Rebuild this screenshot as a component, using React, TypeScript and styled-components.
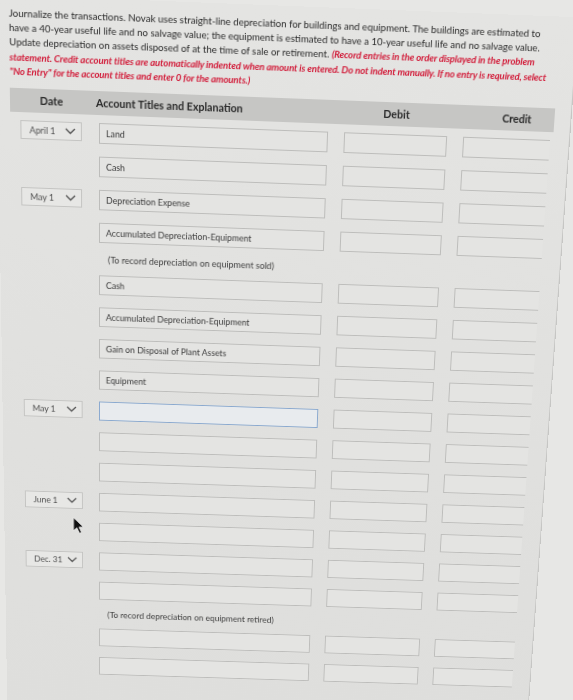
import React from "react";
import styled, { createGlobalStyle } from "styled-components";

const GlobalStyle = createGlobalStyle`
  html, body {
    margin: 0;
    padding: 0;
    height: 700px;
    overflow: hidden;
    background: #e7e7e5;
  }
  body {
    font-family: Lato, "Open Sans", "Liberation Sans", sans-serif;
  }
`;

// the reference is a photo of a screen, so the flat page is warped onto
// the measured corners of the journal table
type Pt = [number, number];

function homography(src: Pt[], dst: Pt[]): number[] {
  const A: number[][] = [];
  const b: number[] = [];
  for (let i = 0; i < 4; i++) {
    const [x, y] = src[i];
    const [u, v] = dst[i];
    A.push([x, y, 1, 0, 0, 0, -x * u, -y * u]);
    b.push(u);
    A.push([0, 0, 0, x, y, 1, -x * v, -y * v]);
    b.push(v);
  }
  for (let c = 0; c < 8; c++) {
    let p = c;
    for (let r = c + 1; r < 8; r++) if (Math.abs(A[r][c]) > Math.abs(A[p][c])) p = r;
    [A[c], A[p]] = [A[p], A[c]];
    [b[c], b[p]] = [b[p], b[c]];
    for (let r = 0; r < 8; r++) {
      if (r === c) continue;
      const f = A[r][c] / A[c][c];
      for (let k = c; k < 8; k++) A[r][k] -= f * A[c][k];
      b[r] -= f * b[c];
    }
  }
  return b.map((v, i) => v / A[i][i]);
}

const warp = (() => {
  const [a, b, c, d, e, f, g, h] = homography(
    [
      [100, 123],
      [550, 123],
      [100, 709],
      [550, 709],
    ],
    [
      [99, 123],
      [550, 140],
      [99, 657],
      [513, 670],
    ]
  );
  return `matrix3d(${a},${d},0,${g},${b},${e},0,${h},0,0,1,0,${c},${f},0,1)`;
})();

const Screen = styled.div`
  position: relative;
  width: 569px;
  height: 780px;
  transform-origin: 0 0;
  background: linear-gradient(180deg, #e4e4e2 0%, #e0e0de 60%, #dededc 100%);
  border-right: 1px solid #c6c6c4;
`;

const Intro = styled.div`
  padding: 11px 0 0 12px;
  font-size: 9.55px;
  line-height: 14.2px;
  color: #2b2b2b;
`;

const Line = styled.div`
  white-space: nowrap;
`;

const Red = styled.span`
  color: #d21f3c;
  font-weight: 700;
  font-style: italic;
  letter-spacing: -0.15px;
`;

const Grid = styled.div`
  display: grid;
  grid-template-columns: 62px 228px 103px 87px;
  column-gap: 16px;
  padding-left: 10px;
`;

const Header = styled(Grid)`
  margin: 9px 0 0 12px;
  width: 541px;
  height: 24px;
  box-sizing: border-box;
  align-items: center;
  background: #c6c6c4;
  font-size: 10.6px;
  font-weight: 700;
  color: #2a2a2a;
`;

const HeadCell = styled.div<{ $align?: string; $shift?: number }>`
  text-align: ${(p) => p.$align || "center"};
  margin-left: ${(p) => p.$shift || 0}px;
  white-space: nowrap;
`;

const Body = styled.div`
  margin: 8px 0 0 12px;
`;

const Row = styled(Grid)`
  height: 34px;
  align-items: start;
`;

const NoteRow = styled.div`
  height: 21px;
  padding-left: 97px;
  box-sizing: border-box;
  font-size: 9px;
  line-height: 10px;
  color: #3d3d3d;
  white-space: nowrap;
`;

const DateCell = styled.div`
  position: relative;
  height: 21px;
`;

const DateSelect = styled.div`
  height: 19px;
  width: 61px;
  box-sizing: border-box;
  border: 1px solid #c4c4c2;
  background: #e7e7e5;
  display: flex;
  align-items: center;
  justify-content: space-between;
  padding: 0 5px 0 8px;
  font-size: 8.8px;
  color: #4f4f4f;
`;

const Field = styled.div<{ $focused?: boolean; $open?: boolean }>`
  height: 21px;
  box-sizing: border-box;
  border: ${(p) => (p.$focused ? "1.5px solid #8aa9cf" : "1px solid #bdbdbb")};
  border-right: ${(p) => (p.$open ? "none" : "")};
  background: ${(p) => (p.$focused ? "#e8ebee" : "#e4e4e2")};
  display: flex;
  align-items: center;
  padding-left: 6px;
  font-size: 8.8px;
  color: #3a3a3a;
  white-space: nowrap;
  overflow: hidden;
`;

const Cursor = styled.svg`
  position: absolute;
  left: 50px;
  top: -6px;
`;

const Chevron = () => (
  <svg width="11" height="7" viewBox="0 0 11 7">
    <polyline points="1,1 5.5,5.5 10,1" fill="none" stroke="#505050" strokeWidth="1.3" />
  </svg>
);

type Entry = {
  note?: string;
  date?: string;
  account?: string;
  focused?: boolean;
  cursor?: boolean;
};

const rows: Entry[] = [
  { date: "April 1", account: "Land" },
  { account: "Cash" },
  { date: "May 1", account: "Depreciation Expense" },
  { account: "Accumulated Depreciation-Equipment" },
  { note: "(To record depreciation on equipment sold)" },
  { account: "Cash" },
  { account: "Accumulated Depreciation-Equipment" },
  { account: "Gain on Disposal of Plant Assets" },
  { account: "Equipment" },
  { date: "May 1", focused: true },
  {},
  {},
  { date: "June 1" },
  { cursor: true },
  { date: "Dec. 31" },
  {},
  { note: "(To record depreciation on equipment retired)" },
  {},
  {},
];

const App = () => {
  return (
    <>
      <GlobalStyle />
      <Screen style={{ transform: warp }}>
        <Intro>
          <Line>
            Journalize the transactions. Novak uses straight-line depreciation for buildings and equipment. The
            buildings are estimated to
          </Line>
          <Line>
            have a 40-year useful life and no salvage value; the equipment is estimated to have a 10-year useful life
            and no salvage value.
          </Line>
          <Line>
            Update depreciation on assets disposed of at the time of sale or retirement.{" "}
            <Red>(Record entries in the order displayed in the problem</Red>
          </Line>
          <Line>
            <Red>
              statement. Credit account titles are automatically indented when amount is entered. Do not indent
              manually. If no entry is required, select
            </Red>
          </Line>
          <Line>
            <Red>"No Entry" for the account titles and enter 0 for the amounts.)</Red>
          </Line>
        </Intro>

        <Header>
          <HeadCell>Date</HeadCell>
          <HeadCell $align="left" $shift={-3}>
            Account Titles and Explanation
          </HeadCell>
          <HeadCell>Debit</HeadCell>
          <HeadCell $shift={18}>Credit</HeadCell>
        </Header>

        <Body>
          {rows.map((r, i) =>
            r.note ? (
              <NoteRow key={i}>{r.note}</NoteRow>
            ) : (
              <Row key={i}>
                <DateCell>
                  {r.date && (
                    <DateSelect>
                      <span>{r.date}</span>
                      <Chevron />
                    </DateSelect>
                  )}
                  {r.cursor && (
                    <Cursor width="13" height="20" viewBox="0 0 13 20">
                      <path
                        d="M1 1 L1 16 L4.6 12.6 L7.4 18.6 L9.6 17.6 L6.9 11.8 L11.6 11.6 Z"
                        fill="#111"
                        stroke="#f2f2f2"
                        strokeWidth="0.8"
                      />
                    </Cursor>
                  )}
                </DateCell>
                <Field $focused={r.focused}>{r.account}</Field>
                <Field />
                <Field $open />
              </Row>
            )
          )}
        </Body>
      </Screen>
    </>
  );
};

export default App;
